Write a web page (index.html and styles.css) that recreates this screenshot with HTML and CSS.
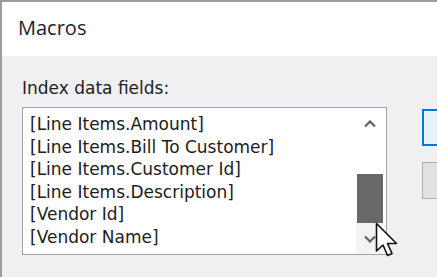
FILE: index.html
```html
<!DOCTYPE html>
<html lang="en">
<head>
  <meta charset="UTF-8">
  <meta name="viewport" content="width=device-width, initial-scale=1.0">
  <title>Macros</title>
  <link rel="stylesheet" href="styles.css">
</head>
<body>
  <div class="window">
    <header class="titlebar">Macros</header>

    <div class="dialog">
      <div class="fields">
        <label class="fields-label" for="fieldlist">Index data fields:</label>
        <div class="listbox" id="fieldlist">
          <ul class="items">
            <li>[Line Items.Amount]</li>
            <li>[Line Items.Bill To Customer]</li>
            <li>[Line Items.Customer Id]</li>
            <li>[Line Items.Description]</li>
            <li>[Vendor Id]</li>
            <li>[Vendor Name]</li>
          </ul>
          <div class="scrollbar">
            <div class="arrow up">
              <svg width="12" height="8" viewBox="0 0 12 8"><path d="M1 6.5 L6 1.5 L11 6.5" fill="none" stroke="#606060" stroke-width="2.2"/></svg>
            </div>
            <div class="track">
              <div class="thumb"></div>
            </div>
            <div class="arrow down">
              <svg width="12" height="8" viewBox="0 0 12 8"><path d="M1 1.5 L6 6.5 L11 1.5" fill="none" stroke="#606060" stroke-width="2.2"/></svg>
            </div>
          </div>
        </div>
      </div>

      <div class="buttons">
        <button class="btn primary"></button>
        <button class="btn"></button>
      </div>
    </div>

    <svg class="cursor" width="28" height="40" viewBox="0 0 28 40">
      <path d="M1.5 1.5 L1.5 29 L8 23 L12.5 33.5 L17 31.5 L12.5 21.5 L21.5 21.5 Z" fill="#fff" stroke="#111" stroke-width="1.6" stroke-linejoin="round"/>
    </svg>
  </div>
</body>
</html>
```

FILE: styles.css
```css
:root {
  --clr-frame: #9c9c9c;
  --clr-face: #f0eff1;
  --clr-text: #1a1a1a;
  --clr-border: #a3a3a3;
  --clr-blue: #0078d7;
}

* {
  padding: 0;
  margin: 0;
  box-sizing: border-box;
}

html, body {
  width: 437px;
  height: 277px;
  overflow: hidden;
}

body {
  background-color: var(--clr-face);
  color: var(--clr-text);
  font-family: Tahoma, "DejaVu Sans", "Liberation Sans", sans-serif;
}

.window {
  position: relative;
  height: 100%;
  border-top: 2px solid var(--clr-frame);
  border-left: 2px solid var(--clr-frame);
  display: flex;
  flex-direction: column;
}

.titlebar {
  height: 54px;
  background-color: #fff;
  padding: 14px 0 0 16px;
  font-family: "Open Sans", "Noto Sans", sans-serif;
  font-size: 20px;
  line-height: 24px;
  color: #1c1c2c;
}

.dialog {
  flex: 1;
  display: flex;
  gap: 35px;
  padding: 22px 0 0 20px;
  overflow: hidden;
}

.fields {
  display: flex;
  flex-direction: column;
  gap: 8px;
}

.fields-label {
  font-size: 17px;
  line-height: 21px;
  color: #222;
}

.listbox {
  width: 365px;
  height: 148px;
  background-color: #fff;
  border: 1px solid var(--clr-border);
  display: flex;
}

.items {
  flex: 1;
  list-style: none;
  padding: 5px 0 0 7px;
  font-size: 17px;
  line-height: 22.6px;
  color: #202020;
}

.scrollbar {
  width: 30px;
  display: flex;
  flex-direction: column;
  padding-right: 3px;
}

.arrow {
  height: 31px;
  display: flex;
  justify-content: center;
  align-items: center;
}

.arrow.down {
  background-color: #f3f3f3;
}

.track {
  flex: 1;
  display: flex;
  flex-direction: column;
  justify-content: flex-end;
}

.thumb {
  height: 49px;
  margin-left: 1px;
  background-color: #686868;
}

.buttons {
  display: flex;
  flex-direction: column;
  gap: 16px;
  padding-top: 31px;
}

.btn {
  width: 80px;
  height: 37px;
  border: 1px solid #adadad;
  background-color: #e1e1e1;
}

.btn.primary {
  border: 2px solid var(--clr-blue);
  background-color: #e5f1fb;
}

.cursor {
  position: absolute;
  left: 373px;
  top: 220px;
}
```
